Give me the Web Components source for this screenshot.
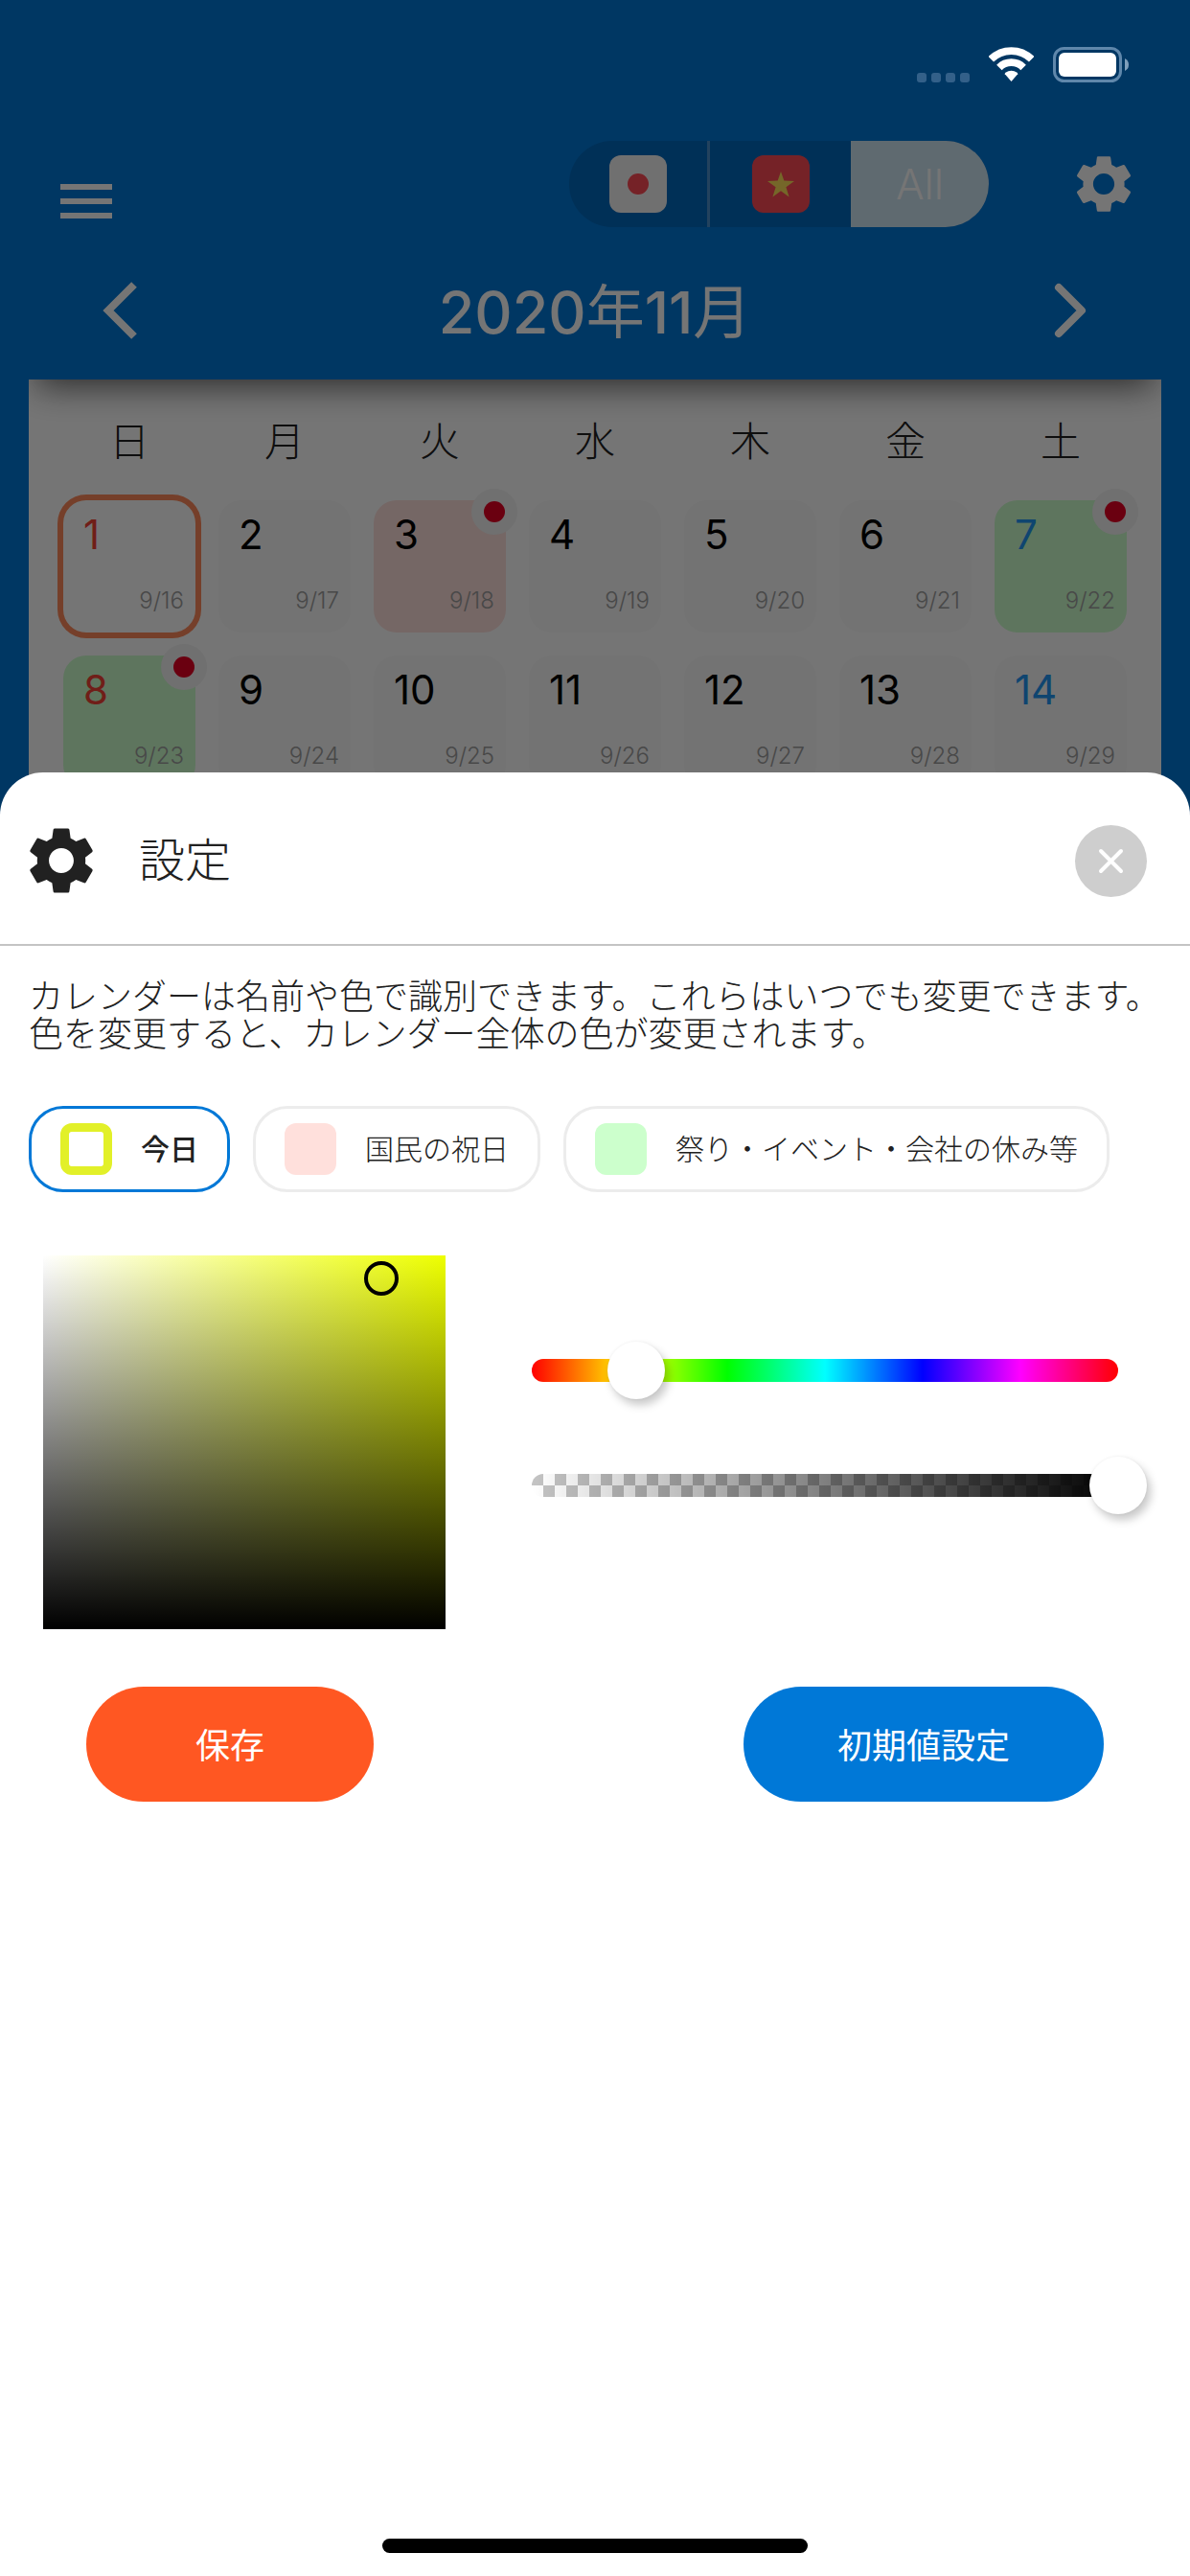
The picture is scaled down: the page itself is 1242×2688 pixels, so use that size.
<!DOCTYPE html>
<html lang="ja">
<head>
<meta charset="utf-8">
<meta name="viewport" content="width=device-width, initial-scale=1">
<title>カレンダー設定</title>
<style>
  body { margin: 0; font-family: Inter, "Noto Sans CJK JP", sans-serif; font-weight: 300; color: #212121; background: #0078d7; }
</style>
</head>
<body>
<calendar-app></calendar-app>

<script>
const define = (name, html, setup) => {
  const template = document.createElement('template');
  template.innerHTML = `<style>
    *, *::before, *::after { box-sizing: border-box; }
    button { font: inherit; color: inherit; border: 0; padding: 0; margin: 0; background: none; cursor: pointer; }
    svg { display: block; }
  </style>` + html;
  customElements.define(name, class extends HTMLElement {
    connectedCallback() {
      if (this.shadowRoot) return;
      const root = this.attachShadow({ mode: 'open' });
      root.append(template.content.cloneNode(true));
      if (setup) setup(root, this);
    }
  });
};

/* Settings gear, sized by --size */
define('gear-icon', `
  <style>
    :host { display: block; width: var(--size, 72px); height: var(--size, 72px); }
    svg { width: 100%; height: 100%; fill: currentColor; }
  </style>
  <svg viewBox="0 0 24 24" aria-hidden="true"><path d="M19.14,12.94c0.04-0.3,0.06-0.61,0.06-0.94c0-0.32-0.02-0.64-0.07-0.94l2.03-1.58c0.18-0.14,0.23-0.41,0.12-0.61l-1.92-3.32c-0.12-0.22-0.37-0.29-0.59-0.22l-2.39,0.96c-0.5-0.38-1.03-0.7-1.62-0.94L14.4,2.81c-0.04-0.24-0.24-0.41-0.48-0.41h-3.84c-0.24,0-0.43,0.17-0.47,0.41L9.25,5.35C8.66,5.59,8.12,5.92,7.63,6.29L5.24,5.33c-0.22-0.08-0.47,0-0.59,0.22L2.74,8.87C2.62,9.08,2.66,9.34,2.86,9.48l2.03,1.58C4.84,11.36,4.8,11.69,4.8,12s0.02,0.64,0.07,0.94l-2.03,1.58c-0.18,0.14-0.23,0.41-0.12,0.61l1.92,3.32c0.12,0.22,0.37,0.29,0.59,0.22l2.39-0.96c0.5,0.38,1.03,0.7,1.62,0.94l0.36,2.54c0.05,0.24,0.24,0.41,0.48,0.41h3.84c0.24,0,0.44-0.17,0.47-0.41l0.36-2.54c0.59-0.24,1.13-0.56,1.62-0.94l2.39,0.96c0.22,0.08,0.47,0,0.59-0.22l1.92-3.32c0.12-0.22,0.07-0.47-0.12-0.61L19.14,12.94z M12,15.7c-2.04,0-3.7-1.66-3.7-3.7s1.66-3.7,3.7-3.7s3.7,1.66,3.7,3.7S14.04,15.7,12,15.7z"/></svg>
`);

define('status-bar', `
  <style>
    :host { display: flex; justify-content: flex-end; align-items: flex-end; gap: 20px; padding: 49px 64px 0 0; }
    .dots { display: flex; gap: 5px; }
    .dots i { width: 10px; height: 10px; border-radius: 3px; background: #336089; }
  </style>
  <div class="dots"><i></i><i></i><i></i><i></i></div>
  <svg width="47" height="37" viewBox="0 0 47 37" aria-hidden="true">
    <g fill="none" stroke="#fff" stroke-width="7.8"><path d="M2.3 12.8A30 30 0 0 1 44.7 12.8"/><path d="M10.9 21.4A17.8 17.8 0 0 1 36.1 21.4"/></g>
    <path fill="#fff" d="M23.5 36L16.8 28.3Q16.6 27.4 17.4 26.8Q23.5 22.8 29.6 26.8Q30.4 27.4 30.2 28.3Z"/>
  </svg>
  <svg width="79" height="37" viewBox="0 0 79 37" aria-hidden="true">
    <rect x="1.5" y="1.5" width="69" height="34" rx="10" fill="none" stroke="#5f87ab" stroke-width="3"/>
    <rect x="6" y="6" width="60" height="25" rx="6" fill="#fff"/>
    <path fill="#7f9fbb" d="M75 12Q79 14 79 18.5Q79 23 75 25Z"/>
  </svg>
`);

define('country-switch', `
  <style>
    :host { display: block; }
    .group { display: grid; grid-template-columns: 144px 150px 144px; height: 90px; border-radius: 45px; overflow: hidden; background: #0069bd; }
    button { display: grid; place-items: center; }
    .vn { border-left: 3px solid #4c91cc; }
    .all { background: #cfe6f5; color: #fff; font-size: 44px; font-weight: 300; line-height: 90px; }
  </style>
  <div class="group" role="group">
    <button aria-label="日本"><svg width="60" height="60" viewBox="0 0 60 60"><rect width="60" height="60" rx="12" fill="#f5f5f5"/><circle cx="30" cy="30" r="11" fill="#ff4b55"/></svg></button>
    <button class="vn" aria-label="ベトナム"><svg width="60" height="60" viewBox="0 0 60 60"><rect width="60" height="60" rx="12" fill="#ff4b55"/><path fill="#ffe15a" d="M30 17l3.3 9.6 10.7.3-8.6 6.3 3.2 10.3-8.6-6.2-8.6 6.2 3.2-10.3-8.6-6.3 10.7-.3z"/></svg></button>
    <button class="all" aria-pressed="true">All</button>
  </div>
`);

define('month-header', `
  <style>
    :host { display: block; color: #fff; }
    .tools { display: flex; align-items: flex-start; gap: 84px; padding: 15px 54px 0; height: 114px; }
    .menu { margin: 27px auto 0 0; }
    .gear { margin-top: 9px; }
    .month { display: flex; align-items: center; justify-content: space-between; padding: 6px 90px 0; height: 150px; }
    h1 { margin: 0; font-size: 61px; line-height: 76px; padding-top: 4px; font-weight: 500; }
    h1 span { font-weight: 400; }
  </style>
  <div class="tools">
    <button class="menu" aria-label="メニュー"><svg width="72" height="72" viewBox="0 0 24 24" fill="currentColor"><path d="M3 6h18v2H3zM3 11h18v2H3zM3 16h18v2H3z"/></svg></button>
    <country-switch></country-switch>
    <button class="gear" aria-label="設定"><gear-icon></gear-icon></button>
  </div>
  <div class="month">
    <button aria-label="前の月"><svg width="72" height="72" viewBox="0 0 72 72" fill="none" stroke="currentColor" stroke-width="8"><path d="M50 9L23 36L50 63"/></svg></button>
    <h1>2020<span>年</span>11<span>月</span></h1>
    <button aria-label="次の月"><svg width="72" height="72" viewBox="0 0 72 72" fill="none" stroke="currentColor" stroke-width="8" stroke-linecap="round" stroke-linejoin="round"><path d="M25 12L49 36L25 60"/></svg></button>
  </div>
`);

/* One day: the solar day number is slotted, the lunar date sits in the corner */
define('day-cell', `
  <style>
    :host { display: block; --bg: #fafafa; --ink: #000; }
    :host([tone=today]) { --bg: #fff; }
    :host([tone=holiday]) { --bg: #ffe0dc; }
    :host([tone=event]) { --bg: #ccffcc; }
    :host([day=sun]) { --ink: #f44336; }
    :host([day=sat]) { --ink: #2196f3; }
    button { position: relative; display: flex; flex-direction: column; justify-content: space-between; width: 100%; height: 138px; padding: 15px 12px 21px 21px; border-radius: 24px; background: var(--bg); color: var(--ink); text-align: left; }
    :host([tone=today]) button { box-shadow: 0 0 0 6px #ff8a5c; }
    .solar { font-size: 42px; line-height: 42px; font-weight: 400; }
    .lunar { align-self: flex-end; font-size: 24px; line-height: 24px; color: #9e9e9e; }
    .badge { position: absolute; top: -12px; right: -12px; display: none; place-items: center; width: 48px; height: 48px; border-radius: 50%; background: #f3f3f3; }
    .badge::before { content: ""; width: 22px; height: 22px; border-radius: 50%; background: #e60024; }
    :host([marked]) .badge { display: grid; }
  </style>
  <button><span class="solar"><slot></slot></span><span class="lunar"></span><span class="badge"></span></button>
`, (root, host) => { root.querySelector('.lunar').textContent = host.getAttribute('lunar'); });

define('month-grid', `
  <style>
    :host { display: block; position: relative; overflow: hidden; flex: 1; margin: 0 30px; padding: 0 36px; background: #fff; }
    :host::before { content: ""; position: absolute; left: 8px; right: 8px; bottom: 100%; height: 48px; box-shadow: 0 6px 36px rgba(0,0,0,.65); }
    .week, .days { display: grid; grid-template-columns: repeat(7, 1fr); gap: 24px; }
    .week { font-size: 42px; line-height: 130px; height: 126px; text-align: center; }
  </style>
  <div class="week"><span>日</span><span>月</span><span>火</span><span>水</span><span>木</span><span>金</span><span>土</span></div>
  <div class="days"></div>
`, root => {
  const tones = { 1: 'today', 3: 'holiday', 7: 'event', 8: 'event' };
  const marked = [3, 7, 8];
  const days = root.querySelector('.days');
  for (let d = 1; d <= 14; d++) {
    const cell = document.createElement('day-cell');
    cell.textContent = d;
    cell.setAttribute('lunar', '9/' + (d + 15));
    if (tones[d]) cell.setAttribute('tone', tones[d]);
    if (d % 7 === 1) cell.setAttribute('day', 'sun');
    if (d % 7 === 0) cell.setAttribute('day', 'sat');
    if (marked.includes(d)) cell.setAttribute('marked', '');
    days.append(cell);
  }
});

define('category-chips', `
  <style>
    :host { display: block; }
    fieldset { display: flex; gap: 24px; margin: 0; padding: 0; border: 0; min-width: 0; }
    label { display: flex; align-items: center; gap: 30px; height: 90px; padding: 0 30px; border: 3px solid #ececec; border-radius: 36px; font-size: 30px; line-height: 36px; white-space: nowrap; cursor: pointer; }
    label:has(:checked) { border-color: #0078d7; font-weight: 500; }
    input { appearance: none; width: 54px; height: 54px; margin: 0; border-radius: 12px; outline: 0; background: var(--c); }
    .ring { border: 9px solid var(--c); background: #fff; }
  </style>
  <fieldset>
    <label style="--c:#e2f029"><input type="radio" name="category" class="ring" checked>今日</label>
    <label style="--c:#ffe0dc"><input type="radio" name="category">国民の祝日</label>
    <label style="--c:#ccffcc"><input type="radio" name="category">祭り・イベント・会社の休み等</label>
  </fieldset>
`);

/* Slider whose thumb centre runs from one end of the bar to the other */
define('track-slider', `
  <style>
    :host { display: grid; align-items: center; }
    .bar, input { grid-area: 1 / 1; }
    .bar { height: 24px; margin: 0 30px; border-radius: 12px; background: var(--track); }
    input { appearance: none; width: 100%; height: 60px; margin: 0; background: none; outline: 0; }
    input::-webkit-slider-runnable-track { height: 60px; background: none; }
    input::-webkit-slider-thumb { appearance: none; width: 60px; height: 60px; border-radius: 50%; background: #fff; box-shadow: 4px 6px 10px rgba(0,0,0,.22), 0 0 3px rgba(0,0,0,.06); }
  </style>
  <div class="bar"></div>
  <input type="range">
`, (root, host) => {
  const input = root.querySelector('input');
  input.max = host.getAttribute('max');
  input.value = host.getAttribute('value');
  input.setAttribute('aria-label', host.getAttribute('label'));
});

define('color-picker', `
  <style>
    :host { display: flex; gap: 60px; }
    .area { position: relative; width: 420px; height: 390px; background: linear-gradient(to top, #000, transparent), linear-gradient(to right, #fff, #eeff00); }
    .cursor { position: absolute; left: 84%; top: 6%; width: 36px; height: 36px; margin: -18px; border: 4px solid #000; border-radius: 50%; }
    .sliders { flex: 1; display: flex; flex-direction: column; gap: 60px; padding-top: 90px; }
    .hue { --track: linear-gradient(to right, #f00, #ff0, #0f0, #0ff, #00f, #f0f, #f00); }
    .alpha { --track: linear-gradient(to right, transparent, #000), repeating-conic-gradient(#fff 0 25%, #c4c4c4 0 50%) 0 0 / 24px 24px; }
  </style>
  <div class="area"><div class="cursor"></div></div>
  <div class="sliders">
    <track-slider class="hue" max="360" value="64" label="色相"></track-slider>
    <track-slider class="alpha" max="100" value="100" label="不透明度"></track-slider>
  </div>
`);

define('pill-button', `
  <style>
    :host { display: block; }
    button { min-width: 300px; height: 120px; padding: 4px 98px 0; border-radius: 60px; background: var(--fill, #0078d7); color: #fff; font-size: 36px; line-height: 42px; font-weight: 400; white-space: nowrap; }
  </style>
  <button><slot></slot></button>
`);

define('settings-sheet', `
  <style>
    :host { display: flex; flex-direction: column; background: #fff; border-radius: 45px 45px 0 0; }
    header { display: flex; align-items: center; gap: 39px; padding: 50px 45px 45px 22px; border-bottom: 2px solid #c4c4c4; }
    gear-icon { --size: 84px; }
    h2 { flex: 1; margin: 0; font-size: 48px; line-height: 60px; font-weight: inherit; }
    .close { display: grid; place-items: center; width: 75px; height: 75px; border-radius: 50%; background: #cecece; }
    .body { display: flex; flex-direction: column; }
    p { margin: 34px 20px 55px 30px; font-size: 36px; line-height: 39px; }
    category-chips { margin: 0 30px 66px; }
    color-picker { margin: 0 45px 60px; }
    .actions { display: flex; justify-content: space-between; padding: 0 90px; }
    .save { --fill: #ff5722; }
    .home { width: 444px; height: 15px; margin: auto auto 24px; border-radius: 8px; background: #000; }
  </style>
  <header>
    <gear-icon></gear-icon>
    <h2><slot name="title"></slot></h2>
    <button class="close" aria-label="閉じる"><svg width="27" height="27" viewBox="0 0 27 27" stroke="#fff" stroke-width="4" stroke-linecap="round"><path d="M3 3L24 24M24 3L3 24"/></svg></button>
  </header>
  <div class="body">
    <p>カレンダーは名前や色で識別できます。これらはいつでも変更できます。<br>色を変更すると、カレンダー全体の色が変更されます。</p>
    <category-chips></category-chips>
    <color-picker></color-picker>
    <div class="actions"><pill-button class="save">保存</pill-button><pill-button>初期値設定</pill-button></div>
  </div>
  <div class="home"></div>
`);

/* Page, scrim, status bar and sheet are stacked in one grid cell */
define('calendar-app', `
  <style>
    :host { display: grid; min-height: 100vh; }
    .page, .scrim, status-bar, settings-sheet { grid-area: 1 / 1; min-width: 0; z-index: 1; }
    .page { display: flex; flex-direction: column; padding-top: 132px; background: #0078d7; z-index: 0; }
    .scrim { background: rgba(0,0,0,.54); }
    status-bar { align-self: start; }
    settings-sheet { align-self: end; min-height: 70vh; }
  </style>
  <div class="page"><month-header></month-header><month-grid></month-grid></div>
  <div class="scrim"></div>
  <status-bar></status-bar>
  <settings-sheet><span slot="title">設定</span></settings-sheet>
`);
</script>
</body>
</html>
